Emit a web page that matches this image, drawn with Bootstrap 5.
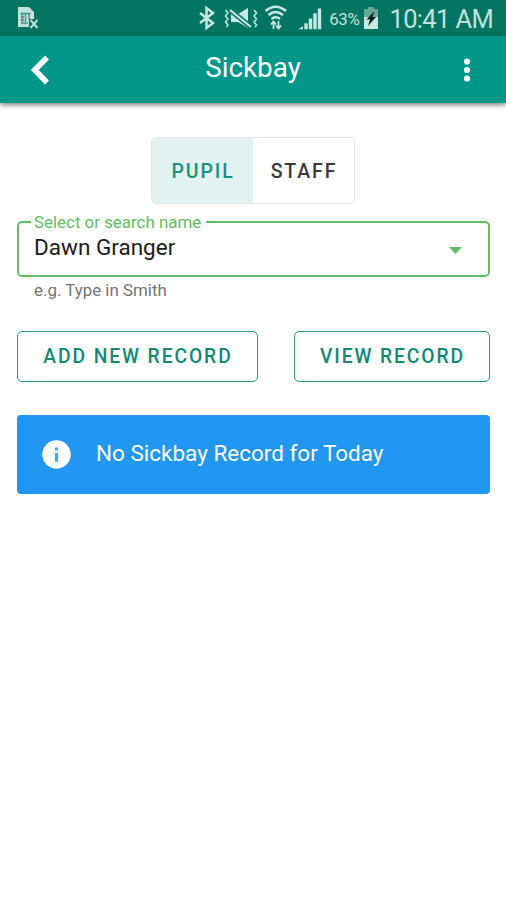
<!DOCTYPE html>
<html lang="en">
<head>
<meta charset="utf-8">
<meta name="viewport" content="width=device-width, initial-scale=1">
<title>Sickbay</title>
<link href="https://cdn.jsdelivr.net/npm/bootstrap@5.3.0/dist/css/bootstrap.min.css" rel="stylesheet">
<style>
body{font-family:Roboto,"Liberation Sans",sans-serif;background:#fff;min-height:900px;overflow:hidden}
svg{display:block;flex:none}
.status{height:36px;background:#017561;color:#bfe3dc;padding:0 13px 0 17px}
.status .pct{font-size:16.8px;line-height:36px;margin:2px 0 0 7px;letter-spacing:-.3px}
.status .clock{font-size:25.5px;line-height:38px;margin:1px 0 0 10px;letter-spacing:-.65px}
.appbar{height:67px;background:#009788;color:#fff;box-shadow:0 2px 5px rgba(0,0,0,.5);padding:0 35px 0 30px}
.appbar h1{font-size:27.8px;line-height:32px;margin:-3px 0 0 -7px;font-weight:400}
.page{padding:34px 16px 0 17px}
.toggle{width:204px;height:67px;margin-left:134px;border:1px solid #e2e5e4;border-radius:5px;overflow:hidden}
.toggle .btn{border:0;border-radius:0;font-size:19.5px;font-weight:500;letter-spacing:1.9px;padding:2px 0 0 1px;color:#3b3b3b}
.toggle .on{background:#e1f2f0;color:#179181;width:101px;flex:none}
.picker{height:56px;margin:17px 0 0;border:2.5px solid #66bb6a;border-radius:5px;padding:0 26px 3px 15px;min-width:0}
.picker legend{position:absolute;left:12px;top:-12px;width:175px;padding:0 3px;background:#fff;color:#66bb6a;font-size:16.9px;line-height:22px;margin:0;white-space:nowrap}
.picker .val{font-size:22.5px;line-height:28px;margin-top:-2px;color:#202020}
.picker svg{margin-top:5px}
.hint{font-size:16.9px;line-height:20px;color:#757575;margin:3px 0 0 17px}
.actions{margin-top:31px}
.actions .btn{height:51px;border:1px solid #2f9a86;border-radius:5px;color:#138975;font-size:19.3px;font-weight:500;letter-spacing:1.9px;padding:2px 0 0 1px}
.b1{width:241px}.b2{width:196px}
.notice{height:79px;margin-top:33px;border:0;border-radius:4px;background:#2196f3;color:#fff;padding:0 25px;gap:25px}
.notice span{font-size:22.5px;line-height:28px;margin-top:-4px}
</style>
<script src="https://cdn.jsdelivr.net/npm/bootstrap@5.3.0/dist/js/bootstrap.bundle.min.js"></script>
</head>
<body>
<header>
<div class="status d-flex align-items-center">
  <svg width="23" height="24" viewBox="0 0 23 24" fill="none" stroke="#bfe3dc">
    <path d="M1 1h11l5 5v9l-4 6H1z" fill="#bfe3dc" stroke="none"/>
    <path d="M3.500 7.500h10M5 8v8M8.500 8v8M12 8v6M4 11h3M4 14h3M4 17h7" stroke="#3f9382" stroke-width="1.300"/>
    <path d="M12 13h10v9H12z" fill="#017561" stroke="none"/>
    <path d="M13.500 14l7 8M20.500 14l-7 8" stroke-width="1.900"/>
  </svg>
  <svg class="ms-auto" width="124" height="30" viewBox="198 2 124 30" fill="none" stroke="#c5e8e1" stroke-width="2">
    <path d="M200 12l13 10-6.500 5V7l6.500 5-13 10" stroke-width="2.500"/>
    <path d="M225.500 9l2.500 3-2.500 3 2.500 3-2.500 3 2.500 3-1.500 2M254 9l2.500 3-2.500 3 2.500 3-2.500 3 2.500 3-1.500 2" stroke-width="1.500"/>
    <path d="M231 13h7l10-6v20l-10-6h-7z" fill="#c5e8e1" stroke="none"/>
    <path d="M230 9l21 17" stroke="#017561" stroke-width="5"/>
    <path d="M230 9l21 17" stroke-width="2.200"/>
    <path d="M265.500 10q10-8.500 20.500 0M268.500 14q7-6 14.500 0M271.500 18q4-3.500 8.500 0" stroke-width="2.600"/>
    <path d="M273.500 28v-7M271 23.500l2.500-3 2.500 3M278.500 20v7M276 24.500l2.500 3 2.500-3" stroke-width="1.800"/>
    <path d="M298.500 28.300L303 25v3.300z" fill="#c5e8e1" stroke="none"/>
    <path d="M306 28.300v-6M310.500 28.300V17.500M315 28.300v-16M319.500 28.300V7.500" stroke-width="3.400"/>
  </svg>
  <span class="pct">63%</span>
  <svg class="ms-1" width="16" height="24" viewBox="0 0 16 24">
    <path d="M5 1h6v2h4v20H1V3h4z" fill="#63aa9b"/><path d="M1 11h14v12H1z" fill="#c5e8e1"/>
    <path d="M11.500 5L3.500 13.500h3.500L5 20l8-9H9.500z" fill="#06231d"/>
  </svg>
  <span class="clock text-nowrap">10:41 AM</span>
</div>
<nav class="appbar d-flex align-items-center justify-content-between position-relative">
  <svg width="20" height="30" viewBox="0 0 20 30" fill="none" stroke="#fff" stroke-width="5.500"><path d="M17 2.500L4.700 15 17 27.500"/></svg>
  <h1>Sickbay</h1>
  <svg width="8" height="24" viewBox="0 0 8 24" fill="#fff"><circle cx="4" cy="3.500" r="3.100"/><circle cx="4" cy="12" r="3.100"/><circle cx="4" cy="20.500" r="3.100"/></svg>
</nav>
</header>
<main class="page">
  <div class="toggle d-flex">
    <button class="btn on" type="button">PUPIL</button>
    <button class="btn flex-fill" type="button">STAFF</button>
  </div>
  <div class="picker position-relative d-flex align-items-center justify-content-between">
    <legend>Select or search name</legend>
    <span class="val">Dawn Granger</span>
    <svg width="13" height="7" viewBox="0 0 13 7"><path d="M0 0h13L6.500 7z" fill="#66bb6a"/></svg>
  </div>
  <p class="hint">e.g. Type in Smith</p>
  <div class="actions d-flex justify-content-between">
    <button class="btn b1" type="button">ADD NEW RECORD</button>
    <button class="btn b2" type="button">VIEW RECORD</button>
  </div>
  <div class="notice alert d-flex align-items-center mb-0" role="alert">
    <svg width="29" height="29" viewBox="0 0 29 29"><circle cx="14.500" cy="14.500" r="14.200" fill="#fff"/><path d="M12.900 7.500h3.200v3h-3.200zM12.900 12.700h3.200v9h-3.200z" fill="#4ba5ee"/></svg>
    <span>No Sickbay Record for Today</span>
  </div>
</main>
</body>
</html>
